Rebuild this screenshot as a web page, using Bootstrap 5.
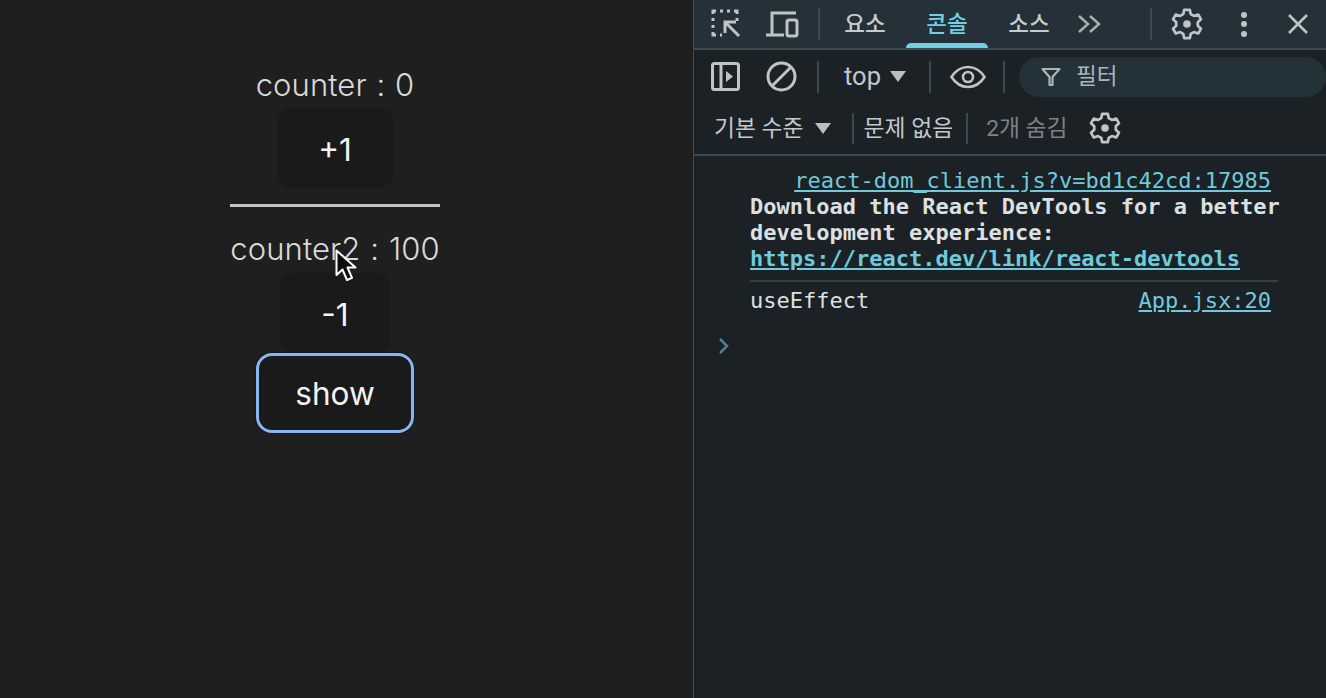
<!DOCTYPE html>
<html lang="ko">
<head>
<meta charset="utf-8">
<title>counter</title>
<link href="https://cdn.jsdelivr.net/npm/bootstrap@5.3.0/dist/css/bootstrap.min.css" rel="stylesheet">
<style>
html,body{height:100%;overflow:hidden}
body{background:#1e1e1e;font-family:Inter,"Noto Sans CJK KR",sans-serif}
.shell{width:1326px;height:698px}
.app-pane{width:693px;background:#1f1f1f;position:relative;padding:66px 23px 0 0;color:#dcdcdc}
.stack{width:210px}
.count-line{font-size:31px;line-height:38px;height:38px;white-space:nowrap;color:#d9d9d9;font-weight:300;letter-spacing:.1px;word-spacing:1px}
.cnt-btn{background:#1a1a1a;color:#f4f4f4;border:0;border-radius:14px;height:80px;font-size:31.500px;font-family:Inter,sans-serif;padding:3px 0 0;display:block}
.w-a{width:116px;margin-top:4px}
.w-b{width:110px;margin-top:5px}
.w-c{width:152px;height:74px;margin-top:3px;padding-top:2px;outline:3.500px solid #8ab6ef;border-radius:13px;box-shadow:0 0 0 4px #14181f}
.rule{width:210px;height:3px;background:#c4c4c4;margin:16px 0 23px;opacity:1;border:0}
.cursor{position:absolute;left:334px;top:249px;width:24px;height:36px}
.dev{width:633px;background:#1b2125;border-left:1px solid #3e4f56;font-family:Roboto,"Noto Sans CJK KR",sans-serif;color:#c3c8cb}
.tabsbar{height:50px;background:#243138;border-bottom:2px solid #3b4a50;position:relative}
.tabsbar>*{flex:none}
.ic{display:block;flex:none}
.sep{width:2px;height:32px;background:#3b4a50;flex:none}
.sep.s{height:31px}
.tab{font-size:22.500px;line-height:30px;color:#c6cbce;width:82px;text-align:center;font-weight:500}
.tab.on{color:#70cfe2;position:relative}
.tab.on::after{content:"";position:absolute;left:0;right:0;bottom:-9px;height:5px;background:#70cfe2;border-radius:5px 5px 0 0}
.bar2{height:52px;padding-top:1px}
.bar3{height:54px;border-bottom:2px solid #3b4a50;font-size:22.800px}
.bar3 span{padding-top:2px}
.lbl{font-size:25.500px;color:#c3c8cb}
.caret{width:0;height:0;border-left:8px solid transparent;border-right:8px solid transparent;border-top:11px solid #b9bec1;flex:none}
.filterbox{background:#223238;height:40px;border-radius:20px;width:307px;font-size:22.500px;color:#aeb4b7}
.muted2{color:#7b8184}
.logs{font-family:"DejaVu Sans Mono",monospace;font-size:22px;line-height:26px;padding:12px 0 0 56px;color:#dde0e2}
.logs a{color:#6fcadb}
.r-link{padding-right:55px;text-align:right;height:26px}
.msg{font-weight:700;width:532px;white-space:nowrap}
.log-rule{height:2px;background:#343f44;width:528px;margin-top:8px}
.line-row{width:521px;height:38px;padding-top:6px}
.prompt{margin:17px 0 0 24px}
</style>
</head>
<body>
<div class="shell d-flex">
  <main class="app-pane d-flex justify-content-center">
    <div class="stack d-flex flex-column align-items-center">
      <div class="count-line">counter : 0</div>
      <button class="cnt-btn w-a">+1</button>
      <div class="rule"></div>
      <div class="count-line">counter2 : 100</div>
      <button class="cnt-btn w-b">-1</button>
      <button class="cnt-btn w-c">show</button>
    </div>
    <svg class="cursor" viewBox="0 0 24 36"><path d="M2.500 1.500V26l6-5.500 4.500 10.500 5-2.200-4.500-10.300h8z" fill="#0b0b0b" stroke="#fff" stroke-width="2" stroke-linejoin="round"/></svg>
  </main>
  <section class="dev d-flex flex-column">
    <div class="tabsbar d-flex align-items-center">
      <svg class="ic" style="margin-left:17px" width="30" height="30" viewBox="0 0 30 30" fill="none" stroke="#bfc4c7" stroke-width="3"><path d="M2 5V2h3M9 2h3M16 2h3M23 2h3v3M26 9v3M2 9v3M2 16v3M2 23v3h3M9 26h2" /><path d="M28 27 15 14M14 24V13h11"/></svg>
      <svg class="ic" style="margin-left:25px" width="33" height="28" viewBox="0 0 33 28" fill="none" stroke="#bfc4c7" stroke-width="3"><path d="M30 3H6v21M0 25h18"/><rect x="21" y="10" width="10" height="16" rx="2"/></svg>
      <div class="sep" style="margin-left:19px"></div>
      <div class="tab" style="margin-left:4px">요소</div>
      <div class="tab on">콘솔</div>
      <div class="tab">소스</div>
      <svg class="ic" style="margin-left:7px" width="26" height="20" viewBox="0 0 26 20" fill="none" stroke="#a8aeb1" stroke-width="2.500"><path d="M2 2l9 8-9 8M13 2l9 8-9 8"/></svg>
      <div class="sep" style="margin-left:47px"></div>
      <svg class="ic" style="margin-left:18px" width="34" height="34" viewBox="0 0 24 24" fill="none" stroke="#bfc4c7" stroke-width="1.900"><path d="M10 2h4l.6 3 2.300 1.300 3-1 2 3.400-2.300 2.100v2.400l2.300 2.100-2 3.400-3-1L14.600 19l-.6 3h-4l-.6-3-2.300-1.300-3 1-2-3.400 2.300-2.100v-2.400L2.100 8.700l2-3.400 3 1L9.400 5z" stroke-linejoin="round"/><circle cx="12" cy="12" r="2.700" fill="#bfc4c7" stroke="none"/></svg>
      <svg class="ic" style="margin-left:36px" width="8" height="26" viewBox="0 0 8 26" fill="#bfc4c7"><circle cx="4" cy="4" r="3"/><circle cx="4" cy="13" r="3"/><circle cx="4" cy="23" r="3"/></svg>
      <svg class="ic" style="margin-left:39px" width="22" height="22" viewBox="0 0 22 22" stroke="#bfc4c7" stroke-width="2.500"><path d="M2 2l18 18M20 2 2 20"/></svg>
    </div>
    <div class="bar2 d-flex align-items-center">
      <svg class="ic" style="margin-left:17px" width="29" height="29" viewBox="0 0 29 29" fill="none" stroke="#bfc4c7" stroke-width="3"><rect x="1.500" y="1.500" width="26" height="26" rx="2"/><path d="M10 2v25"/><path d="M15 9l7 5.500-7 5.500z" fill="#bfc4c7" stroke="none"/></svg>
      <svg class="ic" style="margin-left:26px" width="31" height="31" viewBox="0 0 31 31" fill="none" stroke="#bfc4c7" stroke-width="3"><circle cx="15.500" cy="15.500" r="13.500"/><path d="M6 25 25 6"/></svg>
      <div class="sep" style="margin-left:20px"></div>
      <div class="lbl" style="margin-left:25px">top</div>
      <div class="caret" style="margin-left:9px"></div>
      <div class="sep" style="margin-left:23px"></div>
      <svg class="ic" style="margin-left:19px" width="36" height="24" viewBox="0 0 36 24" fill="none" stroke="#bfc4c7" stroke-width="2.600"><path d="M1.500 12C6 5 11 2 18 2s12 3 16.500 10C30 19 25 22 18 22S6 19 1.500 12z"/><circle cx="18" cy="12" r="5"/></svg>
      <div class="sep" style="margin-left:17px"></div>
      <div class="filterbox d-flex align-items-center" style="margin-left:14px">
        <svg class="ic" style="margin-left:22px" width="20" height="20" viewBox="0 0 20 20" fill="none" stroke="#aeb4b7" stroke-width="2.200"><path d="M1.500 2h17L11.500 10v8h-3v-8z" stroke-linejoin="round"/></svg>
        <span style="margin-left:15px">필터</span>
      </div>
    </div>
    <div class="bar3 d-flex align-items-center">
      <span style="margin-left:20px">기본 수준</span>
      <div class="caret" style="margin-left:11px"></div>
      <div class="sep s" style="margin-left:21px"></div>
      <span style="margin-left:10px">문제 없음</span>
      <div class="sep s" style="margin-left:13px"></div>
      <span class="muted2" style="margin-left:18px">2개 숨김</span>
      <svg class="ic" style="margin-left:20px" width="34" height="34" viewBox="0 0 24 24" fill="none" stroke="#bfc4c7" stroke-width="1.900"><path d="M10 2h4l.6 3 2.300 1.300 3-1 2 3.400-2.300 2.100v2.400l2.300 2.100-2 3.400-3-1L14.600 19l-.6 3h-4l-.6-3-2.300-1.300-3 1-2-3.400 2.300-2.100v-2.400L2.100 8.700l2-3.400 3 1L9.400 5z" stroke-linejoin="round"/><circle cx="12" cy="12" r="2.700" fill="#bfc4c7" stroke="none"/></svg>
    </div>
    <div class="logs">
      <div class="r-link"><a href="#">react-dom_client.js?v=bd1c42cd:17985</a></div>
      <div class="msg">Download the React DevTools for a better<br>development experience:<br><a href="#">https://react.dev/link/react-devtools</a></div>
      <div class="log-rule"></div>
      <div class="line-row d-flex justify-content-between"><span>useEffect</span><a href="#">App.jsx:20</a></div>
    </div>
    <svg class="ic prompt" width="12" height="18" viewBox="0 0 12 18" fill="none" stroke="#4f8196" stroke-width="2.500"><path d="M2 2l7 7-7 7"/></svg>
  </section>
</div>
<script src="https://cdn.jsdelivr.net/npm/bootstrap@5.3.0/dist/js/bootstrap.bundle.min.js"></script>
</body>
</html>
